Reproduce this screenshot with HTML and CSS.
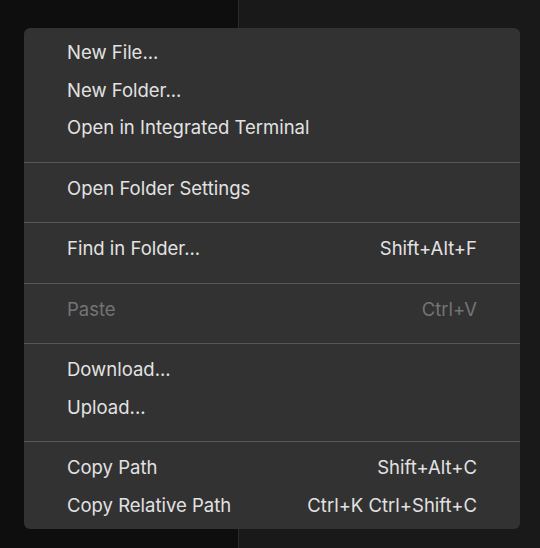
FILE: index.html
```html
<!DOCTYPE html>
<html lang="en">
<head>
<meta charset="utf-8">
<title>Context menu</title>
<link rel="stylesheet" href="styles.css">
</head>
<body>
<div class="workbench">
  <div class="pane pane-left"></div>
  <div class="divider"></div>
  <div class="pane pane-right"></div>
</div>
<div class="menu" role="menu">
  <div class="item"><span class="label">New File...</span></div>
  <div class="item"><span class="label">New Folder...</span></div>
  <div class="item"><span class="label">Open in Integrated Terminal</span></div>
  <div class="sep"></div>
  <div class="item"><span class="label">Open Folder Settings</span></div>
  <div class="sep"></div>
  <div class="item"><span class="label">Find in Folder...</span><span class="key">Shift+Alt+F</span></div>
  <div class="sep"></div>
  <div class="item disabled"><span class="label">Paste</span><span class="key">Ctrl+V</span></div>
  <div class="sep"></div>
  <div class="item"><span class="label">Download...</span></div>
  <div class="item"><span class="label">Upload...</span></div>
  <div class="sep"></div>
  <div class="item"><span class="label">Copy Path</span><span class="key">Shift+Alt+C</span></div>
  <div class="item"><span class="label">Copy Relative Path</span><span class="key">Ctrl+K Ctrl+Shift+C</span></div>
</div>
</body>
</html>
```
FILE: styles.css
```css
html, body {
  margin: 0;
  padding: 0;
  width: 540px;
  height: 548px;
  overflow: hidden;
  background: #0e0e0e;
  font-family: Inter, "Noto Sans", sans-serif;
}

.workbench {
  display: flex;
  width: 540px;
  height: 548px;
}

.pane-left {
  width: 238px;
  background: #0e0e0e;
}

.divider {
  width: 1px;
  background: #2b2b2b;
}

.pane-right {
  flex: 1;
  background: #191919;
}

.menu {
  position: absolute;
  left: 24px;
  top: 28px;
  width: 496px;
  box-sizing: border-box;
  padding: 5.5px 0 5.5px;
  background: #323232;
  border-radius: 6px;
  color: #e2e2e2;
  font-size: 18.5px;
}

.item {
  display: flex;
  align-items: center;
  justify-content: space-between;
  height: 37.5px;
  padding: 0 43px;
  line-height: 1;
  white-space: nowrap;
}

.item.disabled {
  color: #747474;
}

.sep {
  height: 1px;
  background: #575757;
  margin: 15.5px 0 6.5px;
}
```
